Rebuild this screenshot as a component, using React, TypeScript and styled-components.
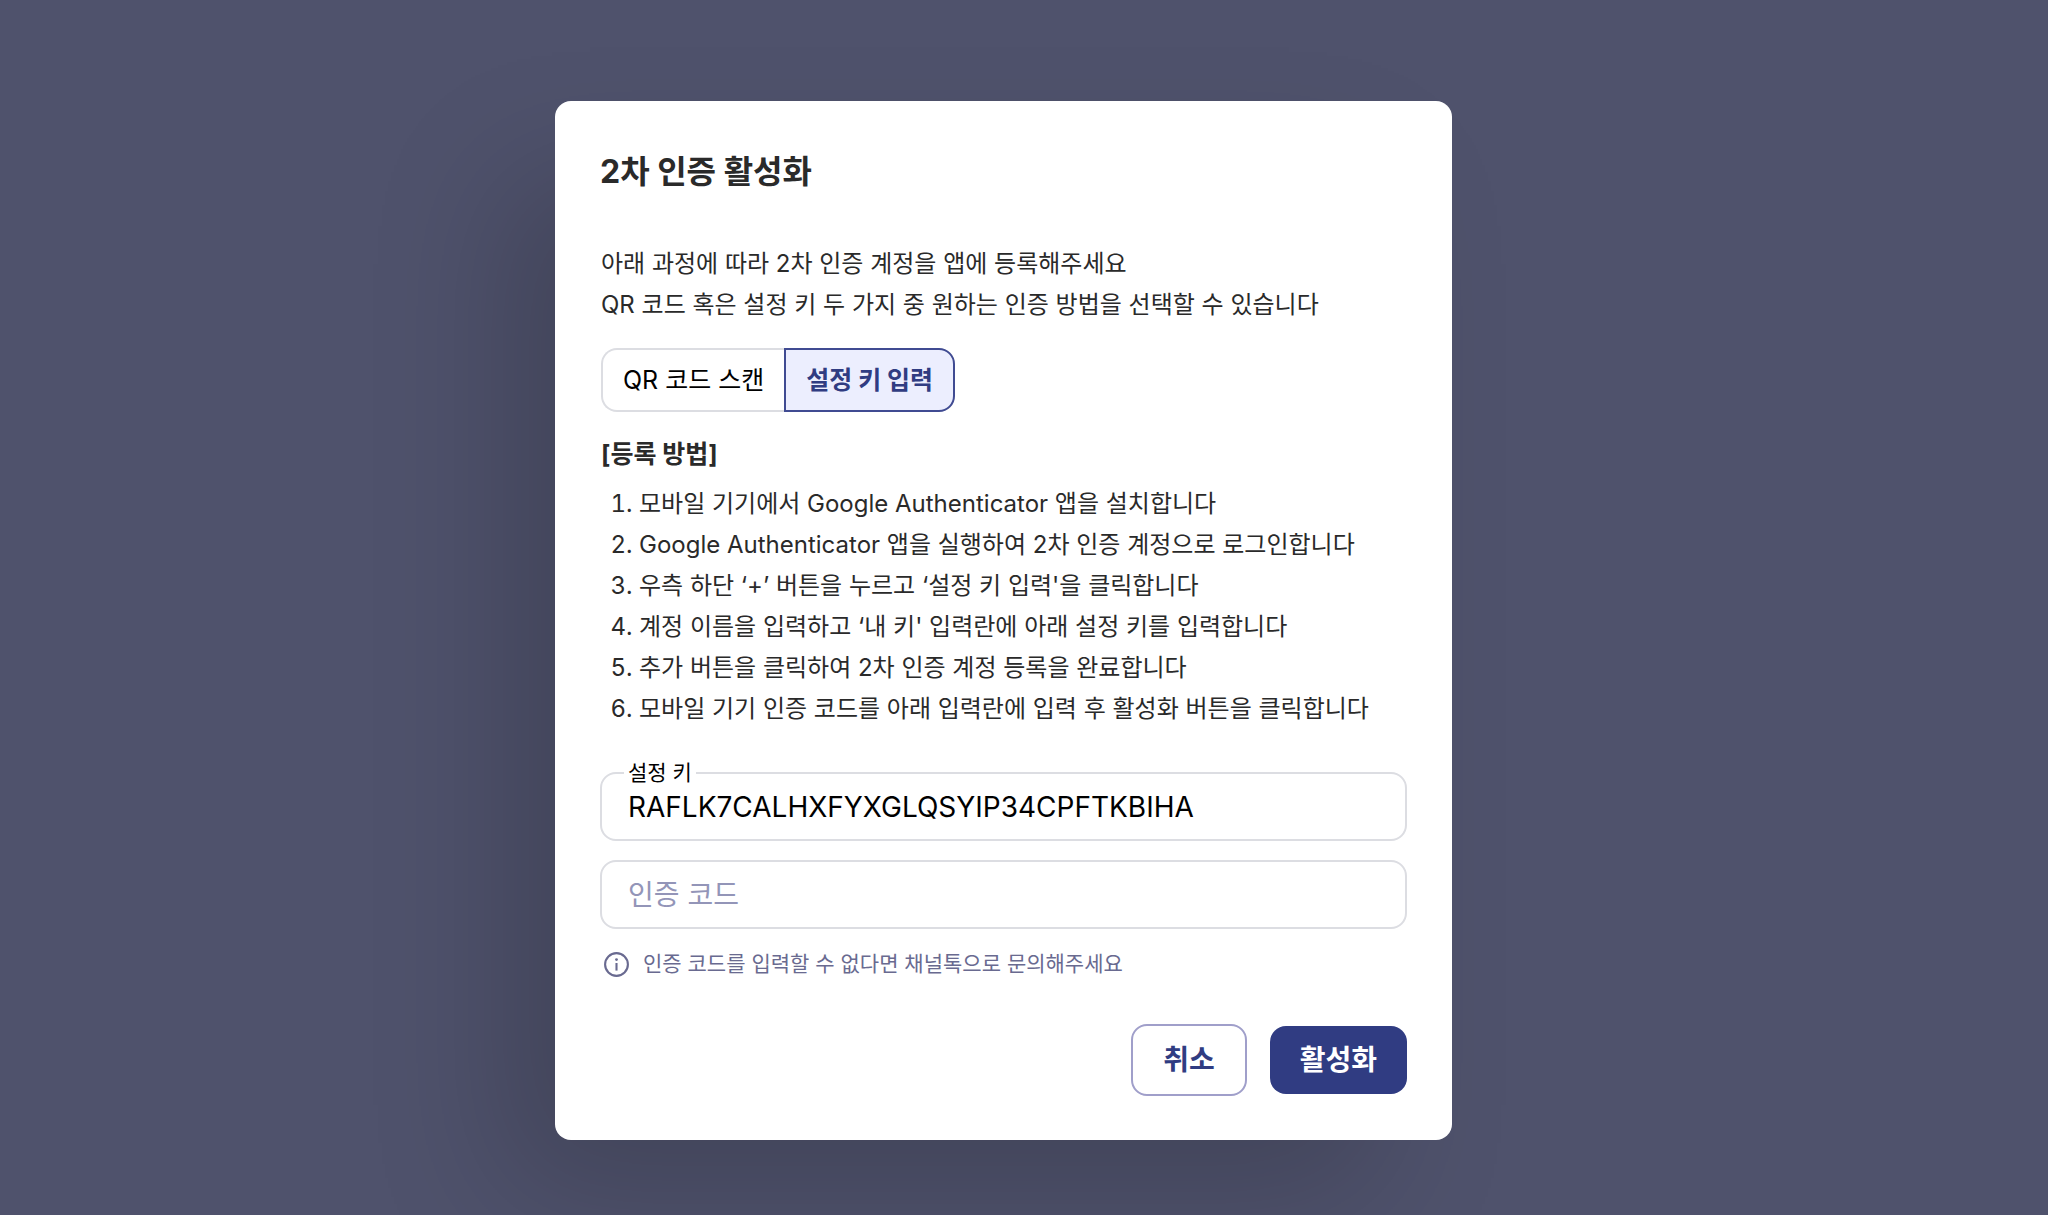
import React, { useState } from "react";
import styled, { createGlobalStyle, css } from "styled-components";

const color = {
  backdrop: "#4f526c",
  primary: "#303c82",
  primaryLine: "#404b92",
  primarySoft: "#eceefe",
  text: "#2a2a2a",
  line: "#dcdde2",
  outline: "#a09fca",
  placeholder: "#9395b8",
  hint: "#696a90",
};

const GlobalStyle = createGlobalStyle`
  *, *::before, *::after { box-sizing: border-box; }
  body {
    margin: 0;
    background: ${color.backdrop};
    font-family: Inter, "Noto Sans CJK KR", sans-serif;
    -webkit-font-smoothing: antialiased;
  }
  button, input { font: inherit; }
`;

const Backdrop = styled.main`
  display: flex;
  justify-content: center;
  align-items: center;
  min-height: 100vh;
  padding: 101px 41px 75px 0;
  overflow: hidden;
`;

const Dialog = styled.section`
  width: 100%;
  max-width: 897px;
  padding: 47px 45px 44px;
  border-radius: 16px;
  background: #fff;
  color: ${color.text};
  box-shadow: -64px 64px 128px -16px rgba(0, 0, 0, 0.18);
`;

const Title = styled.h1`
  margin: 0;
  font-size: 32px;
  line-height: 48px;
  font-weight: 700;
`;

const Body = styled.div`
  margin-top: 47px;
  padding: 0 1px;
  font-size: 24px;
  line-height: 41px;
`;

const Text = styled.p`
  margin: 0;
`;

const Toggle = styled.div`
  display: flex;
  margin-top: 23px;
  font-size: 25px;
`;

const ToggleButton = styled.button<{ $active: boolean }>`
  height: 64px;
  padding: 0 20px;
  border: 2px solid ${color.line};
  background: #fff;
  color: #000;
  line-height: 36px;
  cursor: pointer;

  &:first-child {
    border-right-width: 0;
    border-radius: 16px 0 0 16px;
  }
  &:last-child {
    border-radius: 0 16px 16px 0;
  }
  ${({ $active }) =>
    $active &&
    css`
      border-color: ${color.primaryLine};
      background: ${color.primarySoft};
      color: ${color.primary};
      font-weight: 700;
    `}
`;

const Subheading = styled.h2`
  margin: 22px 0 8px;
  font-size: 25px;
  line-height: 41px;
  font-weight: 700;
`;

const Steps = styled.ol`
  margin: 0;
  padding: 0 0 0 38px;
`;

const Fields = styled.div`
  display: grid;
  gap: 19px;
  margin-top: 43px;
`;

const Field = styled.div`
  position: relative;
`;

const FieldLabel = styled.label`
  position: absolute;
  top: -14px;
  left: 24px;
  padding: 0 4px;
  background: #fff;
  color: #000;
  font-size: 21px;
  line-height: 30px;
`;

const Input = styled.input`
  display: block;
  width: 100%;
  height: 69px;
  padding: 0 26px;
  border: 2px solid ${color.line};
  border-radius: 16px;
  background: transparent;
  color: #000;
  font-size: 28px;
  line-height: 40px;
  outline: none;

  &::placeholder {
    color: ${color.placeholder};
    opacity: 1;
  }
`;

const Hint = styled.p`
  display: flex;
  align-items: center;
  gap: 14px;
  margin: 19px 0 0;
  padding-left: 4px;
  color: ${color.hint};
  font-size: 21px;
  line-height: 32px;
`;

const Actions = styled.div`
  display: flex;
  justify-content: flex-end;
  align-items: center;
  gap: 23px;
  margin-top: 44px;
`;

const Button = styled.button<{ $variant: "outlined" | "contained" }>`
  padding: 14px 30px;
  border: 0;
  border-radius: 16px;
  background: ${color.primary};
  color: #fff;
  font-size: 28px;
  line-height: 40px;
  font-weight: 700;
  cursor: pointer;

  ${({ $variant }) =>
    $variant === "outlined" &&
    css`
      border: 2px solid ${color.outline};
      background: #fff;
      color: ${color.primary};
    `}
`;

const InfoIcon = () => (
  <svg width="25" height="25" viewBox="0 0 25 25" fill="none" aria-hidden="true">
    <circle cx="12.5" cy="12.5" r="11.4" stroke="currentColor" strokeWidth="2.1" />
    <circle cx="12.5" cy="7.6" r="1.4" fill="currentColor" />
    <path d="M12.5 11v7.6" stroke="currentColor" strokeWidth="2.1" />
  </svg>
);

const methods = ["QR 코드 스캔", "설정 키 입력"];

const steps = [
  "모바일 기기에서 Google Authenticator 앱을 설치합니다",
  "Google Authenticator 앱을 실행하여 2차 인증 계정으로 로그인합니다",
  "우측 하단 ‘+’ 버튼을 누르고 ‘설정 키 입력'을 클릭합니다",
  "계정 이름을 입력하고 ‘내 키' 입력란에 아래 설정 키를 입력합니다",
  "추가 버튼을 클릭하여 2차 인증 계정 등록을 완료합니다",
  "모바일 기기 인증 코드를 아래 입력란에 입력 후 활성화 버튼을 클릭합니다",
];

export default function App() {
  const [method, setMethod] = useState(methods[1]);
  const [code, setCode] = useState("");

  return (
    <>
      <GlobalStyle />
      <Backdrop>
        <Dialog role="dialog" aria-labelledby="dialog-title">
          <Title id="dialog-title">2차 인증 활성화</Title>
          <Body>
            <Text>아래 과정에 따라 2차 인증 계정을 앱에 등록해주세요</Text>
            <Text>QR 코드 혹은 설정 키 두 가지 중 원하는 인증 방법을 선택할 수 있습니다</Text>
            <Toggle role="group">
              {methods.map((name) => (
                <ToggleButton
                  key={name}
                  type="button"
                  $active={name === method}
                  aria-pressed={name === method}
                  onClick={() => setMethod(name)}
                >
                  {name}
                </ToggleButton>
              ))}
            </Toggle>
            <Subheading>[등록 방법]</Subheading>
            <Steps>
              {steps.map((step) => (
                <li key={step}>{step}</li>
              ))}
            </Steps>
          </Body>
          <Fields>
            <Field>
              <Input id="setup-key" readOnly value="RAFLK7CALHXFYXGLQSYIP34CPFTKBIHA" />
              <FieldLabel htmlFor="setup-key">설정 키</FieldLabel>
            </Field>
            <Field>
              <Input
                aria-label="인증 코드"
                placeholder="인증 코드"
                value={code}
                onChange={(e) => setCode(e.target.value)}
              />
            </Field>
          </Fields>
          <Hint>
            <InfoIcon />
            인증 코드를 입력할 수 없다면 채널톡으로 문의해주세요
          </Hint>
          <Actions>
            <Button type="button" $variant="outlined">취소</Button>
            <Button type="button" $variant="contained">활성화</Button>
          </Actions>
        </Dialog>
      </Backdrop>
    </>
  );
}
